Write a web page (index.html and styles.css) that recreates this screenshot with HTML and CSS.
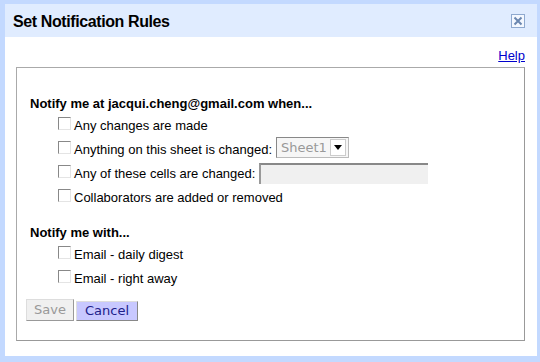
FILE: index.html
```html
<!DOCTYPE html>
<html lang="en">
<head>
  <meta charset="UTF-8">
  <meta name="viewport" content="width=device-width, initial-scale=1.0">
  <title>Set Notification Rules</title>
  <link rel="stylesheet" href="styles.css">
</head>
<body>
  <div class="dialog">
    <div class="titlebar">
      <span class="title">Set Notification Rules</span>
      <span class="close">
        <svg width="10" height="10" viewBox="0 0 10 10"><path d="M1.5 1.5 L8.5 8.5 M8.5 1.5 L1.5 8.5" stroke="#6b87b0" stroke-width="2"/></svg>
      </span>
    </div>

    <div class="content">
      <div class="helpline"><a href="#">Help</a></div>

      <div class="rules">
        <div class="heading">Notify me at jacqui.cheng@gmail.com when...</div>
        <div class="opt"><span class="check"></span>Any changes are made</div>
        <div class="opt"><span class="check"></span>Anything on this sheet is changed:
          <span class="select"><span class="select-text">Sheet1</span><span class="select-arrow"></span></span>
        </div>
        <div class="opt"><span class="check"></span>Any of these cells are changed:
          <span class="textbox"></span>
        </div>
        <div class="opt"><span class="check"></span>Collaborators are added or removed</div>

        <div class="heading second">Notify me with...</div>
        <div class="opt"><span class="check"></span>Email - daily digest</div>
        <div class="opt"><span class="check"></span>Email - right away</div>

        <div class="buttons">
          <span class="btn save">Save</span>
          <span class="btn cancel">Cancel</span>
        </div>
      </div>
    </div>
  </div>
</body>
</html>
```

FILE: styles.css
```css
html, body {
  margin: 0;
  height: 100%;
}

body {
  background: #c3d9ff;
  font-family: "Liberation Sans", Arial, sans-serif;
  font-size: 13px;
  color: #000;
  padding: 4px 3px 6px 5px;
  box-sizing: border-box;
}

.dialog {
  height: 100%;
  display: flex;
  flex-direction: column;
  background: #fff;
}

.titlebar {
  height: 33px;
  background: #e0ecff;
  display: flex;
  align-items: center;
  justify-content: space-between;
  padding: 0 12px 0 8px;
}

.title {
  font-size: 16px;
  letter-spacing: -0.4px;
  font-weight: bold;
  padding-top: 2px;
}

.close {
  width: 12px;
  height: 12px;
  border: 1px solid #8fa9cf;
  background: #f4f8ff;
  display: flex;
  align-items: center;
  justify-content: center;
}

.content {
  flex: 1;
  display: flex;
  flex-direction: column;
  padding: 11px 12px 15px 11px;
}

.helpline {
  text-align: right;
  height: 19px;
}

.helpline a {
  color: #0000cc;
  text-decoration: underline;
}

.rules {
  flex: 1;
  border: 1px solid #aaa;
  border-right-color: #999;
  border-bottom-color: #999;
  padding: 26px 13px 0 13px;
}

.heading {
  font-weight: bold;
  height: 19px;
  line-height: 19px;
}

.heading.second {
  margin-top: 15px;
  height: 18px;
  line-height: 18px;
}

.opt {
  display: flex;
  align-items: center;
  height: 24px;
  padding-left: 28px;
  white-space: nowrap;
}

.check {
  width: 11px;
  height: 11px;
  border-top: 1px solid #888;
  border-left: 1px solid #888;
  border-right: 1px solid #e4e4e4;
  border-bottom: 1px solid #e4e4e4;
  background: #fff;
  margin-right: 3px;
  margin-top: -3px;
}

.select {
  display: inline-flex;
  align-items: center;
  justify-content: space-between;
  width: 67px;
  height: 19px;
  margin-left: 4px;
  margin-top: -3px;
  border: 1px solid #bbb;
  border-top-color: #888;
  border-left-color: #888;
  background: #f6f6f6;
  color: #999;
  font-family: "DejaVu Sans", sans-serif;
  font-size: 13px;
  padding-left: 4px;
}

.select-arrow {
  width: 14px;
  height: 15px;
  margin-right: 2px;
  border: 1px solid #ccc;
  background: #fff;
  position: relative;
}

.select-arrow::after {
  content: "";
  position: absolute;
  left: 3px;
  top: 5px;
  border-left: 4px solid transparent;
  border-right: 4px solid transparent;
  border-top: 5px solid #000;
}

.textbox {
  display: inline-block;
  width: 167px;
  height: 19px;
  margin-left: 4px;
  border-top: 2px solid #888;
  border-left: 2px solid #999;
  background: #f0f0f0;
}

.buttons {
  display: flex;
  gap: 2px;
  margin-top: 9px;
  margin-left: -4px;
}

.btn {
  text-align: center;
  font-size: 13px;
  font-family: "DejaVu Sans", sans-serif;
}

.save {
  width: 46px;
  height: 20px;
  line-height: 20px;
  background: #f0f0f0;
  color: #999;
  border: 1px solid #ddd;
  border-right-color: #999;
  border-bottom-color: #999;
}

.cancel {
  width: 60px;
  background: #c8c8ff;
  color: #20208a;
  border: 1px solid #ddd;
  border-right-color: #888;
  border-bottom-color: #888;
  margin-top: 2px;
  height: 18px;
  line-height: 18px;
}
```
